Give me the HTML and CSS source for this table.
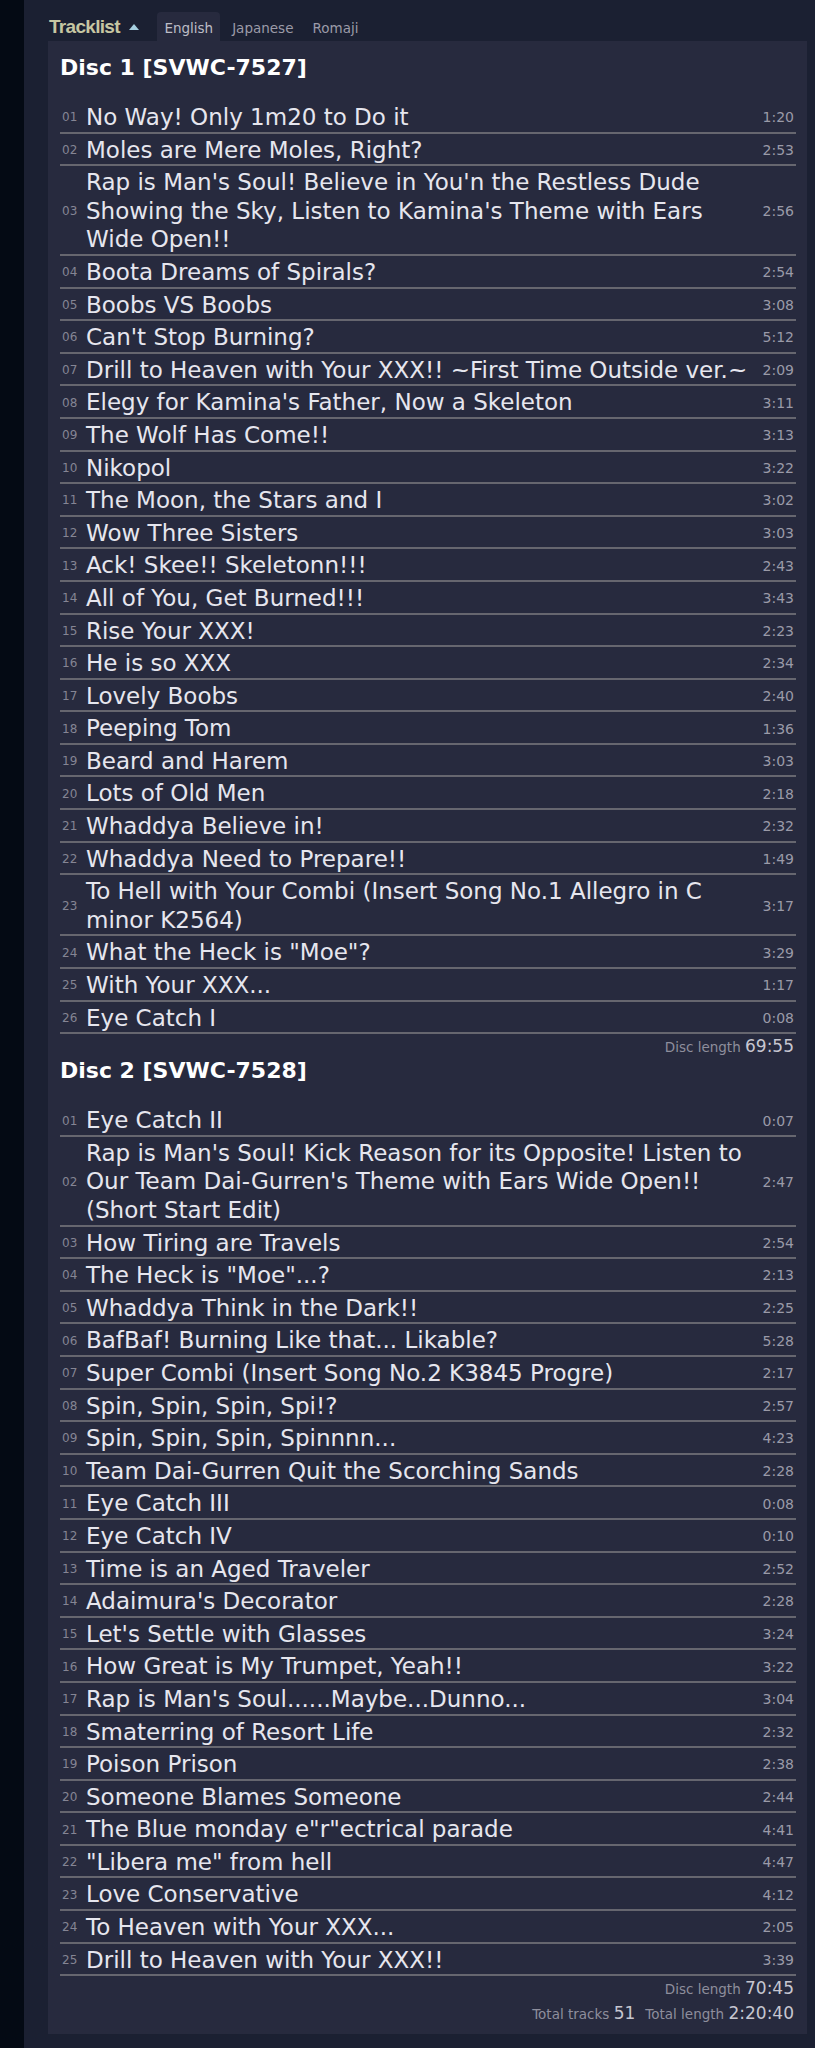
FILE: index.html
```html
<!DOCTYPE html>
<html lang="en">
<head>
    <meta charset="UTF-8">
    <meta name="viewport" content="width=device-width, initial-scale=1.0">
    <title>Tracklist</title>
    <link rel="stylesheet" href="styles.css">
</head>
<body>
<div class="page">
    <div class="tracklist-head">
        <h2 class="tracklist-title">Tracklist <span class="caret"></span></h2>
        <ul class="lang-tabs">
            <li class="active">English</li>
            <li>Japanese</li>
            <li>Romaji</li>
        </ul>
    </div>
    <div class="tracklist">
        <div class="disc">
            <h3 class="disc-title">Disc 1 [SVWC-7527]</h3>
            <table class="tracks">
                <tr><td class="num">01</td><td class="name">No Way! Only 1m20 to Do it</td><td class="time">1:20</td></tr>
                <tr><td class="num">02</td><td class="name">Moles are Mere Moles, Right?</td><td class="time">2:53</td></tr>
                <tr><td class="num">03</td><td class="name">Rap is Man's Soul! Believe in You'n the Restless Dude Showing the Sky, Listen to Kamina's Theme with Ears Wide Open!!</td><td class="time">2:56</td></tr>
                <tr><td class="num">04</td><td class="name">Boota Dreams of Spirals?</td><td class="time">2:54</td></tr>
                <tr><td class="num">05</td><td class="name">Boobs VS Boobs</td><td class="time">3:08</td></tr>
                <tr><td class="num">06</td><td class="name">Can't Stop Burning?</td><td class="time">5:12</td></tr>
                <tr><td class="num">07</td><td class="name">Drill to Heaven with Your XXX!! ~First Time Outside ver.~</td><td class="time">2:09</td></tr>
                <tr><td class="num">08</td><td class="name">Elegy for Kamina's Father, Now a Skeleton</td><td class="time">3:11</td></tr>
                <tr><td class="num">09</td><td class="name">The Wolf Has Come!!</td><td class="time">3:13</td></tr>
                <tr><td class="num">10</td><td class="name">Nikopol</td><td class="time">3:22</td></tr>
                <tr><td class="num">11</td><td class="name">The Moon, the Stars and I</td><td class="time">3:02</td></tr>
                <tr><td class="num">12</td><td class="name">Wow Three Sisters</td><td class="time">3:03</td></tr>
                <tr><td class="num">13</td><td class="name">Ack! Skee!! Skeletonn!!!</td><td class="time">2:43</td></tr>
                <tr><td class="num">14</td><td class="name">All of You, Get Burned!!!</td><td class="time">3:43</td></tr>
                <tr><td class="num">15</td><td class="name">Rise Your XXX!</td><td class="time">2:23</td></tr>
                <tr><td class="num">16</td><td class="name">He is so XXX</td><td class="time">2:34</td></tr>
                <tr><td class="num">17</td><td class="name">Lovely Boobs</td><td class="time">2:40</td></tr>
                <tr><td class="num">18</td><td class="name">Peeping Tom</td><td class="time">1:36</td></tr>
                <tr><td class="num">19</td><td class="name">Beard and Harem</td><td class="time">3:03</td></tr>
                <tr><td class="num">20</td><td class="name">Lots of Old Men</td><td class="time">2:18</td></tr>
                <tr><td class="num">21</td><td class="name">Whaddya Believe in!</td><td class="time">2:32</td></tr>
                <tr><td class="num">22</td><td class="name">Whaddya Need to Prepare!!</td><td class="time">1:49</td></tr>
                <tr><td class="num">23</td><td class="name">To Hell with Your Combi (Insert Song No.1 Allegro in C minor K2564)</td><td class="time">3:17</td></tr>
                <tr><td class="num">24</td><td class="name">What the Heck is "Moe"?</td><td class="time">3:29</td></tr>
                <tr><td class="num">25</td><td class="name">With Your XXX...</td><td class="time">1:17</td></tr>
                <tr><td class="num">26</td><td class="name">Eye Catch I</td><td class="time">0:08</td></tr>
            </table>
            <div class="disc-length">Disc length <span class="value">69:55</span></div>
        </div>
        <div class="disc">
            <h3 class="disc-title">Disc 2 [SVWC-7528]</h3>
            <table class="tracks">
                <tr><td class="num">01</td><td class="name">Eye Catch II</td><td class="time">0:07</td></tr>
                <tr><td class="num">02</td><td class="name">Rap is Man's Soul! Kick Reason for its Opposite! Listen to Our Team Dai-Gurren's Theme with Ears Wide Open!! (Short Start Edit)</td><td class="time">2:47</td></tr>
                <tr><td class="num">03</td><td class="name">How Tiring are Travels</td><td class="time">2:54</td></tr>
                <tr><td class="num">04</td><td class="name">The Heck is "Moe"...?</td><td class="time">2:13</td></tr>
                <tr><td class="num">05</td><td class="name">Whaddya Think in the Dark!!</td><td class="time">2:25</td></tr>
                <tr><td class="num">06</td><td class="name">BafBaf! Burning Like that... Likable?</td><td class="time">5:28</td></tr>
                <tr><td class="num">07</td><td class="name">Super Combi (Insert Song No.2 K3845 Progre)</td><td class="time">2:17</td></tr>
                <tr><td class="num">08</td><td class="name">Spin, Spin, Spin, Spi!?</td><td class="time">2:57</td></tr>
                <tr><td class="num">09</td><td class="name">Spin, Spin, Spin, Spinnnn...</td><td class="time">4:23</td></tr>
                <tr><td class="num">10</td><td class="name">Team Dai-Gurren Quit the Scorching Sands</td><td class="time">2:28</td></tr>
                <tr><td class="num">11</td><td class="name">Eye Catch III</td><td class="time">0:08</td></tr>
                <tr><td class="num">12</td><td class="name">Eye Catch IV</td><td class="time">0:10</td></tr>
                <tr><td class="num">13</td><td class="name">Time is an Aged Traveler</td><td class="time">2:52</td></tr>
                <tr><td class="num">14</td><td class="name">Adaimura's Decorator</td><td class="time">2:28</td></tr>
                <tr><td class="num">15</td><td class="name">Let's Settle with Glasses</td><td class="time">3:24</td></tr>
                <tr><td class="num">16</td><td class="name">How Great is My Trumpet, Yeah!!</td><td class="time">3:22</td></tr>
                <tr><td class="num">17</td><td class="name">Rap is Man's Soul......Maybe...Dunno...</td><td class="time">3:04</td></tr>
                <tr><td class="num">18</td><td class="name">Smaterring of Resort Life</td><td class="time">2:32</td></tr>
                <tr><td class="num">19</td><td class="name">Poison Prison</td><td class="time">2:38</td></tr>
                <tr><td class="num">20</td><td class="name">Someone Blames Someone</td><td class="time">2:44</td></tr>
                <tr><td class="num">21</td><td class="name">The Blue monday e"r"ectrical parade</td><td class="time">4:41</td></tr>
                <tr><td class="num">22</td><td class="name">"Libera me" from hell</td><td class="time">4:47</td></tr>
                <tr><td class="num">23</td><td class="name">Love Conservative</td><td class="time">4:12</td></tr>
                <tr><td class="num">24</td><td class="name">To Heaven with Your XXX...</td><td class="time">2:05</td></tr>
                <tr><td class="num">25</td><td class="name">Drill to Heaven with Your XXX!!</td><td class="time">3:39</td></tr>
            </table>
            <div class="disc-length">Disc length <span class="value">70:45</span></div>
        </div>
        <div class="totals">
            <span>Total tracks <span class="value">51</span></span>
            <span>Total length <span class="value">2:20:40</span></span>
        </div>
    </div>
</div>
</body>
</html>
```

FILE: styles.css
```css
body {
    margin: 0;
    background-color: #040a14;
    font-family: "DejaVu Sans", Verdana, sans-serif;
    color: #e6e6ee;
}

.page {
    margin-left: 24px;
    padding: 0 8px 15px 24px;
    background-color: #1b2032;
}

.tracklist-head {
    display: flex;
    align-items: baseline;
    padding-top: 12px;
}

.tracklist-title {
    margin: 0;
    padding-left: 1px;
    font-family: "Liberation Sans", Arial, sans-serif;
    font-size: 19px;
    font-weight: bold;
    letter-spacing: -0.7px;
    color: #c6c6a2;
}

.caret {
    display: inline-block;
    margin-left: 5px;
    vertical-align: 3px;
    border-left: 5px solid transparent;
    border-right: 5px solid transparent;
    border-bottom: 6px solid #a6cfe0;
}

.lang-tabs {
    display: flex;
    gap: 5px;
    list-style: none;
    margin: 0 0 0 18px;
    padding: 0;
}

.lang-tabs li {
    padding: 8px 7px 5px;
    font-size: 13.5px;
    color: #9b9ba8;
    border-radius: 4px 4px 0 0;
}

.lang-tabs li.active {
    background-color: #272a3e;
    color: #bdbdc6;
}

.tracklist {
    background-color: #272a3e;
    padding: 14px 11px 9px 12px;
}

.disc-title {
    margin: 0 0 20px;
    font-size: 22px;
    line-height: 26px;
    font-weight: bold;
    color: #ffffff;
}

.tracks {
    width: 100%;
    border-collapse: collapse;
}

.tracks tr {
    border-bottom: 2px solid #66666f;
}

.tracks td {
    padding: 2px 0 0;
    vertical-align: middle;
}

.tracks .num {
    width: 24px;
    padding-left: 2px;
    font-size: 12px;
    color: #858594;
}

.tracks .name {
    font-size: 23px;
    line-height: 28.6px;
    color: #e6e6ee;
}

.tracks .time {
    width: 1%;
    padding: 2px 2px 0 8px;
    white-space: nowrap;
    text-align: right;
    font-size: 14px;
    color: #9a9aa8;
}

.disc-length,
.totals {
    padding: 1px 2px 0 0;
    text-align: right;
    font-size: 13.5px;
    line-height: 22px;
    color: #8e8e9c;
}

.totals {
    display: flex;
    justify-content: flex-end;
    gap: 10px;
    margin-top: 1px;
}

.value {
    font-size: 17px;
    color: #c6c6d0;
}
```
